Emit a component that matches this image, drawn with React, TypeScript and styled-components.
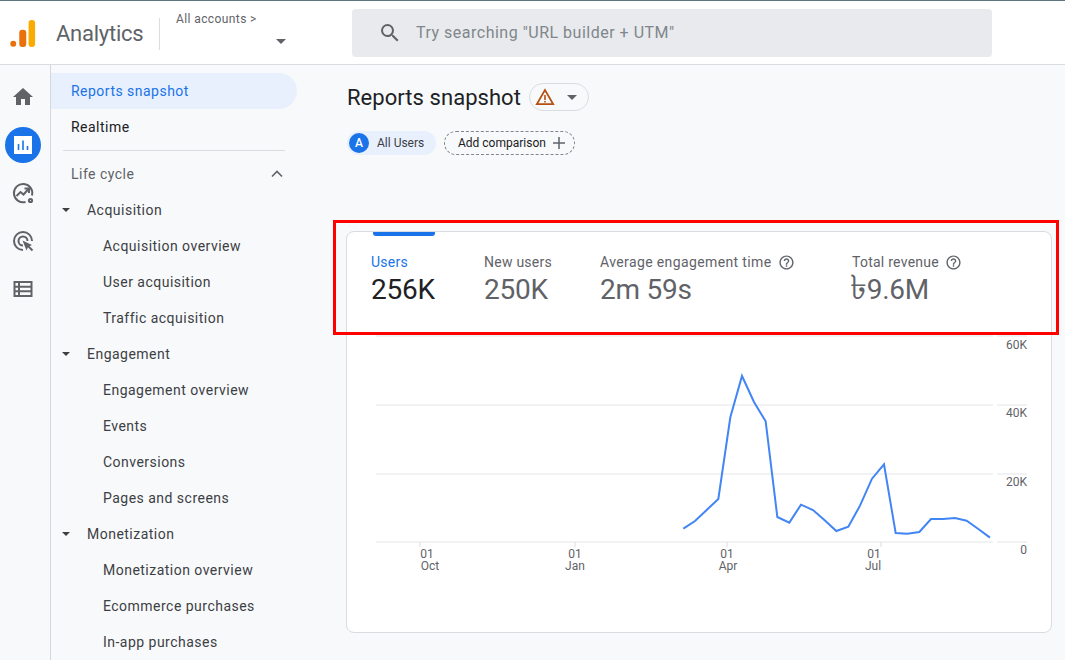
import React from "react";
import styled, { createGlobalStyle } from "styled-components";

const GlobalStyle = createGlobalStyle`
    html, body {
        margin: 0;
        height: 660px;
        overflow: hidden;
        background: #f8f9fb;
        font-family: Roboto, "Noto Sans", sans-serif;
    }
    * { box-sizing: border-box; }
`;

const navItems = [
    { label: "Acquisition", kind: "group" },
    { label: "Acquisition overview", kind: "leaf" },
    { label: "User acquisition", kind: "leaf" },
    { label: "Traffic acquisition", kind: "leaf" },
    { label: "Engagement", kind: "group" },
    { label: "Engagement overview", kind: "leaf" },
    { label: "Events", kind: "leaf" },
    { label: "Conversions", kind: "leaf" },
    { label: "Pages and screens", kind: "leaf" },
    { label: "Monetization", kind: "group" },
    { label: "Monetization overview", kind: "leaf" },
    { label: "Ecommerce purchases", kind: "leaf" },
    { label: "In-app purchases", kind: "leaf" },
];

const metrics = [
    { label: "Users", value: "256K", width: 113, active: true },
    { label: "New users", value: "250K", width: 116 },
    { label: "Average engagement time", value: "2m 59s", width: 252, help: true, wide: true },
    { label: "Total revenue", value: "9.6M", currency: "৳", width: 180, help: true },
];

const line = [
    [70, 566], [105, 543], [140, 510], [175, 477], [211, 232], [246, 108], [282, 186],
    [317, 244], [352, 531], [388, 548], [423, 494], [459, 510], [494, 541], [529, 573],
    [565, 560], [600, 497], [636, 416], [672, 373], [707, 579], [742, 581], [778, 576],
    [813, 537], [849, 537], [885, 534], [920, 542], [955, 567], [990, 593],
];

// chart svg starts at page x=347, y=334
const chartPoints = line.map(([x, y]) => `${660 + x / 3 - 347},${340 + y / 3 - 334}`).join(" ");

const gridLines = [
    { y: 2, labelY: 15, label: "60K" },
    { y: 71, labelY: 83, label: "40K" },
    { y: 140, labelY: 152, label: "20K" },
    { y: 208, labelY: 220, label: "0" },
];

const xTicks = [
    { tick: 73, x: 80, top: "01", bottom: "Oct", bottomX: 83 },
    { tick: 228, x: 228, top: "01", bottom: "Jan", bottomX: 228 },
    { tick: 380, x: 380, top: "01", bottom: "Apr", bottomX: 381 },
    { tick: 534, x: 527, top: "01", bottom: "Jul", bottomX: 526 },
];

const HelpIcon = () => (
    <HelpSvg viewBox="0 0 24 24">
        <path d="M11 18h2v-2h-2v2zm1-16C6.48 2 2 6.48 2 12s4.48 10 10 10 10-4.48 10-10S17.52 2 12 2zm0 18c-4.41 0-8-3.59-8-8s3.59-8 8-8 8 3.59 8 8-3.59 8-8 8zm0-14c-2.21 0-4 1.79-4 4h2c0-1.1.9-2 2-2s2 .9 2 2c0 2-3 1.75-3 5h2c0-2.25 3-2.5 3-5 0-2.21-1.79-4-4-4z" />
    </HelpSvg>
);

const App = () => {
    return (
        <>
            <GlobalStyle />
            <Page>
                <Header>
                    <Logo viewBox="0 0 28 30">
                        <circle cx="3.5" cy="26" r="3.2" fill="#e8710a" />
                        <rect x="10" y="11" width="7.5" height="18.5" rx="3.2" fill="#e8710a" />
                        <rect x="20" y="0.5" width="7" height="29" rx="3.2" fill="#f9ab00" />
                    </Logo>
                    <Brand>Analytics</Brand>
                    <Account>
                        <AccountLink>All accounts &gt;</AccountLink>
                        <AccountCaret />
                    </Account>
                    <Search>
                        <SearchIcon viewBox="0 0 24 24">
                            <path d="M15.5 14h-.79l-.28-.27A6.47 6.47 0 0 0 16 9.5 6.5 6.5 0 1 0 9.5 16c1.61 0 3.09-.59 4.23-1.57l.27.28v.79l5 4.99L20.49 19l-4.99-5zm-6 0C7.01 14 5 11.99 5 9.5S7.01 5 9.5 5 14 7.01 14 9.5 11.99 14 9.5 14z" />
                        </SearchIcon>
                        Try searching "URL builder + UTM"
                    </Search>
                </Header>
                <Body>
                    <Rail>
                        <RailButton>
                            <RailSvg viewBox="0 0 24 24">
                                <path d="M10 20v-6h4v6h5v-8h3L12 3 2 12h3v8z" fill="#5f6368" />
                            </RailSvg>
                        </RailButton>
                        <RailButton $active>
                            <RailSvg viewBox="0 0 24 24">
                                <rect x="3" y="3" width="18" height="18" fill="#fff" />
                                <path d="M7.5 11v6M12 7.5V17M16.5 13v4" stroke="#1a73e8" strokeWidth="1.6" />
                            </RailSvg>
                        </RailButton>
                        <RailButton>
                            <RailSvg viewBox="0 0 24 24" fill="none" stroke="#5f6368" strokeWidth="2">
                                <path d="M21 14.5A9.2 9.2 0 1 0 14.5 21" />
                                <path d="M5.5 15l4-4 3 2.5 5-5.5" />
                                <path d="M13.5 7.5h4.5V12" />
                                <circle cx="19.5" cy="19.5" r="1.6" />
                            </RailSvg>
                        </RailButton>
                        <RailButton>
                            <RailSvg viewBox="0 0 24 24" fill="none" stroke="#5f6368" strokeWidth="2">
                                <path d="M12 21a9 9 0 1 1 9-9" />
                                <path d="M12 16.5a4.5 4.5 0 1 1 4.5-4.5" />
                                <path d="M11.5 11.5l4 10 1.7-3.8 3.8-1.7z" fill="#5f6368" stroke="none" />
                                <path d="M17 17l4.5 4.5" />
                            </RailSvg>
                        </RailButton>
                        <RailButton>
                            <RailSvg viewBox="0 0 24 24" fill="none" stroke="#5f6368" strokeWidth="2">
                                <rect x="3.5" y="5" width="17" height="14" fill="none" />
                                <path d="M3.5 9.7h17M3.5 14.3h17M8 5v14" />
                            </RailSvg>
                        </RailButton>
                    </Rail>
                    <Nav>
                        <TopItem $active>Reports snapshot</TopItem>
                        <TopItem>Realtime</TopItem>
                        <NavDivider />
                        <SectionRow>
                            Life cycle
                            <svg width="14" height="14" viewBox="0 0 14 14" fill="none" stroke="#5f6368" strokeWidth="1.6">
                                <path d="M2 9.5l5-5 5 5" />
                            </svg>
                        </SectionRow>
                        {navItems.map((item) =>
                            item.kind === "group" ? (
                                <GroupRow key={item.label}>
                                    <SmallCaret />
                                    {item.label}
                                </GroupRow>
                            ) : (
                                <LeafRow key={item.label}>{item.label}</LeafRow>
                            )
                        )}
                    </Nav>
                    <Main>
                        <TitleRow>
                            <Title>Reports snapshot</Title>
                            <StatusPill>
                                <svg width="20" height="18" viewBox="0 0 20 18" fill="none">
                                    <path d="M10 2L1.8 16.2h16.4z" stroke="#b5500f" strokeWidth="1.7" />
                                    <path d="M10 7v5M10 13v1.6" stroke="#b5500f" strokeWidth="1.6" />
                                </svg>
                                <AccountCaret />
                            </StatusPill>
                        </TitleRow>
                        <ChipRow>
                            <UserChip>
                                <Avatar>A</Avatar>
                                All Users
                            </UserChip>
                            <AddChip>
                                Add comparison
                                <svg width="14" height="14" viewBox="0 0 14 14" stroke="#5f6368" strokeWidth="1.5">
                                    <path d="M7 1v12M1 7h12" />
                                </svg>
                            </AddChip>
                        </ChipRow>
                        <Card>
                            <TabMark />
                            <Metrics>
                                {metrics.map((m) => (
                                    <Metric key={m.label} $width={m.width}>
                                        <MetricLabel $active={m.active} $wide={m.wide}>
                                            {m.label}
                                            {m.help && <HelpIcon />}
                                        </MetricLabel>
                                        <MetricValue $active={m.active}>
                                            {m.currency && <Currency>{m.currency}</Currency>}
                                            {m.value}
                                        </MetricValue>
                                    </Metric>
                                ))}
                            </Metrics>
                            <Chart viewBox="0 0 704 296">
                                {gridLines.map((g) => (
                                    <g key={g.label}>
                                        <line x1="29" x2="646" y1={g.y} y2={g.y} stroke="#e3e5e8" />
                                        <line x1="650" x2="680" y1={g.y} y2={g.y} stroke="#e3e5e8" />
                                        <AxisText x="680" y={g.labelY} textAnchor="end">
                                            {g.label}
                                        </AxisText>
                                    </g>
                                ))}
                                {xTicks.map((t) => (
                                    <g key={t.bottom}>
                                        <line x1={t.tick} x2={t.tick} y1="208" y2="213" stroke="#dadce0" />
                                        <AxisText x={t.x} y="224" textAnchor="middle">
                                            {t.top}
                                        </AxisText>
                                        <AxisText x={t.bottomX} y="236" textAnchor="middle">
                                            {t.bottom}
                                        </AxisText>
                                    </g>
                                ))}
                                <polyline points={chartPoints} fill="none" stroke="#4285f4" strokeWidth="2" />
                            </Chart>
                        </Card>
                        <Highlight />
                    </Main>
                </Body>
            </Page>
        </>
    );
};

const Page = styled.div`
    width: 1065px;
    height: 660px;
    overflow: hidden;
    display: flex;
    flex-direction: column;
    border-top: 1px solid #5f7680;
`;

const Header = styled.header`
    height: 64px;
    flex: none;
    display: flex;
    align-items: center;
    background: #fff;
    border-bottom: 1px solid #dadce0;
    padding-left: 10px;
`;

const Logo = styled.svg`
    width: 26px;
    height: 29px;
    margin-top: 2px;
`;

const Brand = styled.div`
    margin: 2px 0 0 20px;
    width: 104px;
    height: 32px;
    line-height: 32px;
    font-size: 22px;
    letter-spacing: -0.25px;
    color: #5f6368;
    border-right: 1px solid #dadce0;
`;

const Account = styled.div`
    width: 126px;
    height: 48px;
    padding: 5px 0 0 16px;
    position: relative;
    align-self: flex-start;
    margin-top: 6px;
`;

const AccountLink = styled.div`
    font-size: 12px;
    letter-spacing: 0.4px;
    color: #5f6368;
`;

const AccountCaret = styled.span`
    display: block;
    width: 0;
    height: 0;
    border-left: 5px solid transparent;
    border-right: 5px solid transparent;
    border-top: 5px solid #5f6368;

    ${Account} & {
        margin: 13px 0 0 100px;
    }
`;

const Search = styled.div`
    width: 640px;
    height: 48px;
    margin-left: 66px;
    display: flex;
    align-items: center;
    padding-left: 26px;
    gap: 14px;
    background: #e8eaed;
    border-radius: 4px;
    font-size: 16px;
    letter-spacing: 0.5px;
    color: #80868b;
`;

const SearchIcon = styled.svg`
    width: 24px;
    height: 24px;
    fill: #5f6368;
`;

const Body = styled.div`
    flex: 1;
    display: flex;
    min-height: 0;
`;

const Rail = styled.aside`
    width: 51px;
    flex: none;
    display: flex;
    flex-direction: column;
    align-items: center;
    gap: 12px;
    padding: 14px 5px 0 0;
    border-right: 1px solid #d5d7da;
`;

const RailButton = styled.div<{ $active?: boolean }>`
    width: 36px;
    height: 36px;
    border-radius: 50%;
    display: flex;
    align-items: center;
    justify-content: center;
    background: ${(p) => (p.$active ? "#1a73e8" : "transparent")};
`;

const RailSvg = styled.svg`
    width: 24px;
    height: 24px;
`;

const Nav = styled.nav`
    width: 246px;
    flex: none;
    padding-top: 8px;
    font-size: 14px;
    letter-spacing: 0.48px;
`;

const TopItem = styled.div<{ $active?: boolean }>`
    height: 36px;
    display: flex;
    align-items: center;
    padding-left: 20px;
    border-radius: 0 18px 18px 0;
    background: ${(p) => (p.$active ? "#e8f0fe" : "transparent")};
    color: ${(p) => (p.$active ? "#1a73e8" : "#202124")};
`;

const NavDivider = styled.div`
    height: 1px;
    margin: 5px 12px 5px 12px;
    background: #dadce0;
`;

const SectionRow = styled.div`
    height: 36px;
    display: flex;
    align-items: center;
    justify-content: space-between;
    padding: 0 13px 0 20px;
    color: #5f6368;
`;

const GroupRow = styled.div`
    height: 36px;
    display: flex;
    align-items: center;
    padding-left: 11px;
    gap: 17px;
    color: #3c4043;
`;

const SmallCaret = styled.span`
    width: 0;
    height: 0;
    border-left: 4px solid transparent;
    border-right: 4px solid transparent;
    border-top: 4px solid #3c4043;
`;

const LeafRow = styled.div`
    height: 36px;
    display: flex;
    align-items: center;
    padding-left: 52px;
    color: #3c4043;
`;

const Main = styled.main`
    flex: 1;
    position: relative;
    padding: 18px 13px 0 49px;
`;

const TitleRow = styled.div`
    display: flex;
    align-items: center;
    gap: 8px;
    height: 28px;
    padding-left: 1px;
`;

const Title = styled.h1`
    margin: 0;
    font-size: 22px;
    font-weight: 400;
    letter-spacing: 0.05px;
    color: #202124;
`;

const StatusPill = styled.div`
    width: 60px;
    height: 28px;
    display: flex;
    align-items: center;
    gap: 12px;
    padding-left: 5px;
    border: 1px solid #dadce0;
    border-radius: 14px;
`;

const ChipRow = styled.div`
    display: flex;
    align-items: center;
    gap: 8px;
    margin-top: 20px;
    padding-left: 1px;
`;

const UserChip = styled.div`
    width: 89px;
    height: 24px;
    display: flex;
    align-items: center;
    gap: 8px;
    padding-left: 2px;
    border-radius: 12px;
    background: #e8f0fe;
    font-size: 12px;
    color: #3c4043;
`;

const Avatar = styled.span`
    width: 20px;
    height: 20px;
    border-radius: 50%;
    background: #1a73e8;
    color: #fff;
    font-size: 12px;
    font-weight: 500;
    display: flex;
    align-items: center;
    justify-content: center;
`;

const AddChip = styled.div`
    width: 131px;
    height: 24px;
    display: flex;
    align-items: center;
    gap: 6px;
    padding-left: 13px;
    border: 1px dashed #80868b;
    border-radius: 12px;
    font-size: 12px;
    color: #202124;
`;

const Card = styled.section`
    position: relative;
    height: 402px;
    margin-top: 76px;
    background: #fff;
    border: 1px solid #dadce0;
    border-radius: 8px;
    overflow: hidden;
`;

const TabMark = styled.div`
    position: absolute;
    top: -1px;
    left: 26px;
    width: 62px;
    height: 5px;
    background: #1a73e8;
    border-radius: 0 0 3px 3px;
`;

const Metrics = styled.div`
    display: flex;
    height: 102px;
    padding: 20px 0 0 24px;
`;

const Metric = styled.div<{ $width: number }>`
    width: ${(p) => p.$width}px;
    flex: none;
`;

const MetricLabel = styled.div<{ $active?: boolean; $wide?: boolean }>`
    display: flex;
    align-items: center;
    gap: 6px;
    height: 20px;
    font-size: 14px;
    letter-spacing: ${(p) => (p.$wide ? "0.38px" : "0.25px")};
    color: ${(p) => (p.$active ? "#1a73e8" : "#5f6368")};
`;

const HelpSvg = styled.svg`
    width: 17px;
    height: 17px;
    fill: #5f6368;
`;

const MetricValue = styled.div<{ $active?: boolean }>`
    margin-top: 1px;
    font-size: 28px;
    line-height: 34px;
    letter-spacing: -0.25px;
    color: ${(p) => (p.$active ? "#202124" : "#5f6368")};
`;

const Currency = styled.span`
    font-size: 34px;
    line-height: 0;
    margin-left: -2px;
`;

const Chart = styled.svg`
    display: block;
    width: 704px;
    height: 296px;
`;

const AxisText = styled.text`
    font-size: 12px;
    fill: #5f6368;
`;

const Highlight = styled.div`
    position: absolute;
    left: 36px;
    top: 155px;
    width: 726px;
    height: 115px;
    border: 3px solid #f00;
    pointer-events: none;
`;

export default App;
